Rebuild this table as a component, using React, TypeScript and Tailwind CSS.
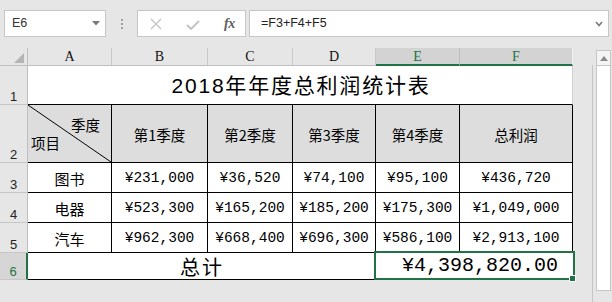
import React from "react";

const rows = [
  ["图书", "¥231,000", "¥36,520", "¥74,100", "¥95,100", "¥436,720"],
  ["电器", "¥523,300", "¥165,200", "¥185,200", "¥175,300", "¥1,049,000"],
  ["汽车", "¥962,300", "¥668,400", "¥696,300", "¥586,100", "¥2,913,100"],
];

function RowHead({ n, sel }: { n: string; sel?: boolean }) {
  return (
    <div
      className={
        sel
          ? "flex items-end justify-center bg-[#d6d6d6] border-r-2 border-r-[#217346] border-b border-b-[#c6c6c6] text-[#217346] text-[13px] leading-none pb-[1px] font-['Liberation_Sans',sans-serif]"
          : "flex items-end justify-center bg-[#e6e6e6] border-r border-r-[#bfbfbf] border-b border-b-[#c6c6c6] text-[#222] text-[13px] leading-none pb-[1px] font-['Liberation_Sans',sans-serif]"
      }
    >
      {n}
    </div>
  );
}

export default function App() {
  return (
    <div className="w-[612px] h-[302px] bg-[#e6e6e6] overflow-hidden flex flex-col font-['Liberation_Sans',sans-serif]">
      {/* formula toolbar */}
      <div className="h-[48px] flex items-start pt-[10px] pl-[4px] shrink-0">
        <div className="w-[102px] h-[27px] bg-white border border-[#c6c6c6] flex items-center justify-between pl-[7px] pr-[5px] text-[12.5px] text-[#333]">
          <span>E6</span>
          <svg width="8" height="5" viewBox="0 0 8 5">
            <polygon points="0,0 8,0 4,4.5" fill="#7a7a7a" />
          </svg>
        </div>
        <div className="w-[31px] h-[27px] flex flex-col items-center justify-center gap-[2px]">
          <div className="w-[2px] h-[2px] bg-[#a0a0a0]" />
          <div className="w-[2px] h-[2px] bg-[#a0a0a0]" />
          <div className="w-[2px] h-[2px] bg-[#a0a0a0]" />
        </div>
        <div className="w-[109px] h-[27px] bg-white border border-[#c6c6c6] flex items-center pl-[12px]">
          <svg width="12" height="12" viewBox="0 0 12 12" className="mr-[24px]">
            <path d="M1 1 L11 11 M11 1 L1 11" stroke="#c4c4c4" strokeWidth="1.3" fill="none" />
          </svg>
          <svg width="14" height="10" viewBox="0 0 14 10" className="mr-[24px] mt-[3px]">
            <path d="M1 5 L5 9 L13 1" stroke="#c4c4c4" strokeWidth="2" fill="none" />
          </svg>
          <span className="font-['Liberation_Serif',serif] italic font-bold text-[14px] text-[#5e5e5e] tracking-[-0.5px]">fx</span>
        </div>
        <div className="w-[3px]" />
        <div className="w-[360px] h-[27px] bg-white border border-[#c6c6c6] flex items-center justify-between pl-[11px] pr-[5px] text-[12.5px] text-[#222]">
          <span>=F3+F4+F5</span>
          <svg width="8" height="6" viewBox="0 0 8 6">
            <path d="M1 1 L4 4.5 L7 1" stroke="#7a7a7a" strokeWidth="1.6" fill="none" />
          </svg>
        </div>
      </div>

      {/* sheet */}
      <div className="flex flex-1">
        <div className="grid grid-cols-[28px_84px_96px_85px_83px_84px_113px] grid-rows-[18px_39px_58px_30px_30px_30px_27px] self-start">
          {/* header row */}
          <div className="bg-[#e6e6e6] border-r border-r-[#bfbfbf] border-b border-b-[#bfbfbf] flex items-end justify-end pr-[3px] pb-[2px]">
            <svg width="10" height="10" viewBox="0 0 10 10">
              <polygon points="10,0 10,10 0,10" fill="#b5b5b5" />
            </svg>
          </div>
          {["A", "B", "C", "D"].map((c) => (
            <div
              key={c}
              className="bg-[#e6e6e6] border-r border-r-[#c8c8c8] border-b border-b-[#bfbfbf] flex items-center justify-center text-[14px] leading-none text-[#111] font-['Liberation_Serif',serif]"
            >
              {c}
            </div>
          ))}
          <div className="bg-[#d3d3d3] border-r border-r-[#bdbdbd] border-b-2 border-b-[#217346] flex items-center justify-center text-[14px] leading-none text-[#217346] font-['Liberation_Serif',serif] pt-[1px]">
            E
          </div>
          <div className="bg-[#d3d3d3] border-r border-r-[#efefef] border-b-2 border-b-[#217346] flex items-center justify-center text-[14px] leading-none text-[#217346] font-['Liberation_Serif',serif] pt-[1px]">
            F
          </div>

          {/* row 1 */}
          <RowHead n="1" />
          <div className="col-span-6 bg-white border-b border-b-black border-r border-r-[#d0d0d0] flex items-center justify-center pt-[2px] pl-[2px] text-[21px] tracking-[1.8px] text-black font-['Liberation_Sans','Noto_Sans_CJK_SC',sans-serif]">
            2018年年度总利润统计表
          </div>

          {/* row 2 */}
          <RowHead n="2" />
          <div className="relative bg-[#dddddd] border-r border-r-black border-b border-b-black flex flex-col pt-[11px] text-[14.5px] leading-[18px] text-black font-['Noto_Sans_CJK_SC',sans-serif]">
            <svg className="absolute inset-0 w-full h-full" viewBox="0 0 83 57" preserveAspectRatio="none">
              <line x1="0" y1="0" x2="83" y2="57" stroke="black" strokeWidth="1" />
            </svg>
            <span className="self-end pr-[11px] relative">季度</span>
            <span className="self-start pl-[3px] relative">项目</span>
          </div>
          {["第1季度", "第2季度", "第3季度", "第4季度", "总利润"].map((t) => (
            <div
              key={t}
              className="bg-[#dddddd] border-r border-r-black border-b border-b-black flex items-center justify-center pt-[3px] text-[14.5px] text-black font-['Noto_Sans_CJK_SC',sans-serif]"
            >
              {t}
            </div>
          ))}

          {/* rows 3-5 */}
          {rows.map((r, i) => (
            <React.Fragment key={i}>
              <RowHead n={String(i + 3)} />
              {r.map((v, j) => (
                <div
                  key={j}
                  className={
                    j === 0
                      ? "bg-white border-r border-r-black border-b border-b-black flex items-center justify-center pt-[3px] text-[15px] text-black font-['Noto_Sans_CJK_SC',sans-serif]"
                      : "bg-white border-r border-r-black border-b border-b-black flex items-center justify-center pt-[3px] text-[14.5px] text-black font-['Liberation_Mono',monospace]"
                  }
                >
                  {v}
                </div>
              ))}
            </React.Fragment>
          ))}

          {/* row 6 */}
          <RowHead n="6" sel />
          <div className="col-span-4 bg-white border-b border-b-black flex items-center justify-center pt-[1px] text-[20px] tracking-[2px] text-black font-['Noto_Sans_CJK_SC',sans-serif]">
            总计
          </div>
          <div className="col-span-2 relative bg-white border-b border-b-black flex items-center justify-end pr-[15px] text-[20px] text-black font-['Liberation_Mono',monospace]">
            ¥4,398,820.00
            <div className="absolute -left-[2px] -top-[2px] -right-[2px] -bottom-[1px] border-2 border-[#217346]" />
            <div className="absolute -right-[3px] -bottom-[3px] w-[7px] h-[7px] bg-[#217346] border border-white" />
          </div>
        </div>

        {/* right side */}
        <div className="flex">
          <div className="w-[19px]" />
          <div className="w-[1px] mt-[17px] bg-[#c6c6c6] h-[237px]" />
          <div className="w-[3px]" />
          <div className="w-[15px] mt-[2px] h-[241px] bg-white border border-[#c6c6c6] flex flex-col">
            <div className="h-[15px] border-b border-[#c6c6c6] flex items-center justify-center bg-[#f4f4f4]">
              <svg width="8" height="5" viewBox="0 0 8 5">
                <polygon points="0,5 8,5 4,0" fill="#8a8a8a" />
              </svg>
            </div>
          </div>
        </div>
      </div>
    </div>
  );
}
